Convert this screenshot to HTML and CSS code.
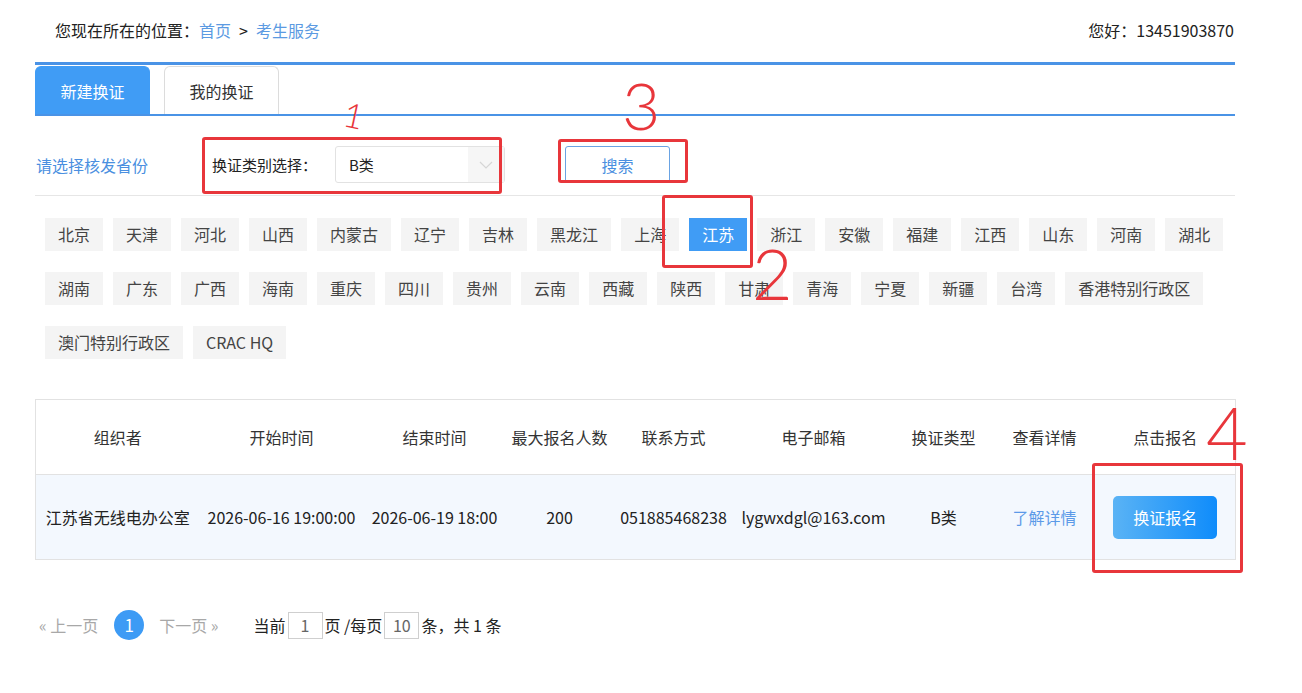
FILE: index.html
```html
<!DOCTYPE html>
<html lang="zh-CN">
<head>
  <meta charset="UTF-8">
  <title>考生服务 - 新建换证</title>
  <link rel="stylesheet" href="styles.css">
</head>
<body>
  <div class="page">
    <div class="topbar">
      <div class="crumb">您现在所在的位置：<a href="#">首页</a><span class="sep">&gt;</span><a href="#">考生服务</a></div>
      <div class="hello">您好：13451903870</div>
    </div>

    <div class="tabs">
      <span class="tab active">新建换证</span>
      <span class="tab">我的换证</span>
    </div>

    <div class="filter">
      <span class="filter-tip">请选择核发省份</span>
      <label class="filter-label">换证类别选择：</label>
      <div class="select">
        <span class="select-value">B类</span>
        <span class="select-arrow">
          <svg width="14" height="10" viewBox="0 0 14 10"><polyline points="1,2 7,8 13,2" fill="none" stroke="#d6d6d6" stroke-width="1.2"/></svg>
        </span>
      </div>
      <button class="search">搜索</button>
    </div>

    <div class="provinces">
      <span class="prov">北京</span>
      <span class="prov">天津</span>
      <span class="prov">河北</span>
      <span class="prov">山西</span>
      <span class="prov">内蒙古</span>
      <span class="prov">辽宁</span>
      <span class="prov">吉林</span>
      <span class="prov">黑龙江</span>
      <span class="prov">上海</span>
      <span class="prov on">江苏</span>
      <span class="prov">浙江</span>
      <span class="prov">安徽</span>
      <span class="prov">福建</span>
      <span class="prov">江西</span>
      <span class="prov">山东</span>
      <span class="prov">河南</span>
      <span class="prov">湖北</span>
      <span class="prov">湖南</span>
      <span class="prov">广东</span>
      <span class="prov">广西</span>
      <span class="prov">海南</span>
      <span class="prov">重庆</span>
      <span class="prov">四川</span>
      <span class="prov">贵州</span>
      <span class="prov">云南</span>
      <span class="prov">西藏</span>
      <span class="prov">陕西</span>
      <span class="prov">甘肃</span>
      <span class="prov">青海</span>
      <span class="prov">宁夏</span>
      <span class="prov">新疆</span>
      <span class="prov">台湾</span>
      <span class="prov">香港特别行政区</span>
      <span class="prov">澳门特别行政区</span>
      <span class="prov">CRAC HQ</span>
    </div>

    <table class="list">
      <colgroup>
        <col style="width:164px"><col style="width:164px"><col style="width:142px">
        <col style="width:108px"><col style="width:120px"><col style="width:160px">
        <col style="width:100px"><col style="width:102px"><col style="width:140px">
      </colgroup>
      <thead>
        <tr>
          <th>组织者</th>
          <th>开始时间</th>
          <th>结束时间</th>
          <th>最大报名人数</th>
          <th>联系方式</th>
          <th>电子邮箱</th>
          <th>换证类型</th>
          <th>查看详情</th>
          <th>点击报名</th>
        </tr>
      </thead>
      <tbody>
        <tr>
          <td>江苏省无线电办公室</td>
          <td>2026-06-16 19:00:00</td>
          <td>2026-06-19 18:00</td>
          <td>200</td>
          <td>051885468238</td>
          <td>lygwxdgl@163.com</td>
          <td>B类</td>
          <td><a href="#" class="detail">了解详情</a></td>
          <td><button class="apply">换证报名</button></td>
        </tr>
      </tbody>
    </table>

    <div class="pager">
      <span class="pg-prev">« 上一页</span>
      <span class="pg-num">1</span>
      <span class="pg-next">下一页 »</span>
      <span class="pg-info">当前<span class="pg-box">1</span>页 /每页<span class="pg-box">10</span>条，共 1 条</span>
    </div>
  </div>

  <!-- hand-drawn annotations -->
  <div class="mark box1"></div>
  <div class="mark box2"></div>
  <div class="mark box3"></div>
  <div class="mark box4"></div>
  <span class="num n1">1</span>
  <span class="num n2">2</span>
  <span class="num n3">3</span>
  <span class="num n4">4</span>
</body>
</html>
```

FILE: styles.css
```css
body {
  margin: 0;
  font-family: "Noto Sans CJK SC", "Noto Sans", sans-serif;
  color: #333;
  background: #fff;
  position: relative;
  min-height: 693px;
}
a {
  text-decoration: none;
}
.page {
  width: 1200px;
  margin-left: 35px;
}
.topbar {
  display: flex;
  justify-content: space-between;
  box-sizing: border-box;
  height: 62px;
  padding: 20px 1px 0 20px;
  font-size: 16px;
  line-height: 20px;
  color: #222;
}
.crumb a {
  color: #5b9ae2;
}
.crumb .sep {
  margin: 0 8px;
}
.tabs {
  display: flex;
  gap: 14px;
  border-top: 3px solid #4a93e6;
  border-bottom: 2px solid #4a93e6;
  padding-top: 1px;
}
.tab {
  box-sizing: border-box;
  width: 115px;
  height: 48px;
  line-height: 48px;
  text-align: center;
  font-size: 16px;
  color: #333;
  border: 1px solid #dcdcdc;
  border-bottom: none;
  border-radius: 6px 6px 0 0;
}
.tab.active {
  background: #409cf5;
  color: #fff;
  border-color: #409cf5;
}
.filter {
  display: flex;
  align-items: center;
  padding: 30px 0 12px;
  border-bottom: 1px solid #e6e6e6;
  font-size: 15px;
}
.filter-tip {
  width: 176px;
  padding-left: 1px;
  font-size: 16px;
  color: #4a8fe0;
}
.filter-label {
  width: 123px;
  color: #222;
}
.select {
  box-sizing: border-box;
  width: 170px;
  height: 37px;
  display: flex;
  border: 1px solid #e2e2e2;
  border-radius: 3px;
}
.select-value {
  flex: 1;
  line-height: 35px;
  padding-left: 13px;
  color: #222;
}
.select-arrow {
  width: 36px;
  display: flex;
  align-items: center;
  justify-content: center;
  background: #f6f6f6;
}
.search {
  box-sizing: border-box;
  width: 105px;
  height: 37px;
  margin-left: 60px;
  background: #fff;
  border: 1px solid #6aa3e3;
  border-radius: 3px;
  color: #4a8fe0;
  font-family: inherit;
  font-size: 16px;
}
.provinces {
  display: flex;
  flex-wrap: wrap;
  gap: 21px 10px;
  padding: 22px 10px 0;
}
.prov {
  height: 33px;
  line-height: 33px;
  padding: 0 13px;
  background: #f4f4f4;
  font-size: 16px;
  color: #444;
}
.prov.on {
  background: #409cf5;
  color: #fff;
}
.list {
  margin-top: 40px;
  width: 1200px;
  table-layout: fixed;
  border-collapse: collapse;
  border: 1px solid #e2e2e2;
  font-size: 16px;
}
.list th {
  height: 72px;
  font-weight: normal;
  color: #333;
  border-bottom: 1px solid #e2e2e2;
}
.list td {
  height: 82px;
  background: #f3f8fe;
  text-align: center;
  color: #222;
  white-space: nowrap;
}
.detail {
  color: #5b9ae8;
}
.apply {
  width: 104px;
  height: 43px;
  border: none;
  border-radius: 5px;
  background: linear-gradient(to right, #5ab3f5, #0f8cfb);
  color: #fff;
  font-family: inherit;
  font-size: 16px;
}
.pager {
  display: flex;
  align-items: center;
  margin-top: 50px;
  padding-left: 4px;
  font-size: 16px;
}
.pg-prev, .pg-next {
  color: #a8a8a8;
}
.pg-num {
  width: 30px;
  height: 30px;
  line-height: 30px;
  border-radius: 50%;
  margin: 0 15px 0 16px;
  background: #3d9bf5;
  color: #fff;
  font-size: 17px;
  text-align: center;
}
.pg-info {
  margin-left: 35px;
  color: #222;
  display: flex;
  align-items: center;
}
.pg-box {
  box-sizing: border-box;
  width: 35px;
  height: 27px;
  line-height: 25px;
  margin: 0 2px;
  border: 1px solid #cfcfcf;
  color: #666;
  text-align: center;
}
.mark {
  position: absolute;
  box-sizing: border-box;
  border: 3px solid #e8363b;
  border-radius: 3px;
}
.box1 { left: 202px; top: 137px; width: 300px; height: 57px; }
.box2 { left: 662px; top: 195px; width: 91px; height: 73px; }
.box3 { left: 558px; top: 139px; width: 130px; height: 44px; }
.box4 { left: 1092px; top: 463px; width: 151px; height: 110px; }
.num {
  position: absolute;
  font-family: Lato, "DejaVu Sans", sans-serif;
  font-weight: 300;
  color: #e8363b;
  line-height: 1;
}
.n1 { left: 344px; top: 98px; font-size: 34px; transform: rotate(12deg); }
.n2 { left: 752px; top: 238px; font-size: 70px; }
.n3 { left: 622px; top: 72px; font-size: 66px; }
.n4 { left: 1206px; top: 396px; font-size: 72px; }
```
